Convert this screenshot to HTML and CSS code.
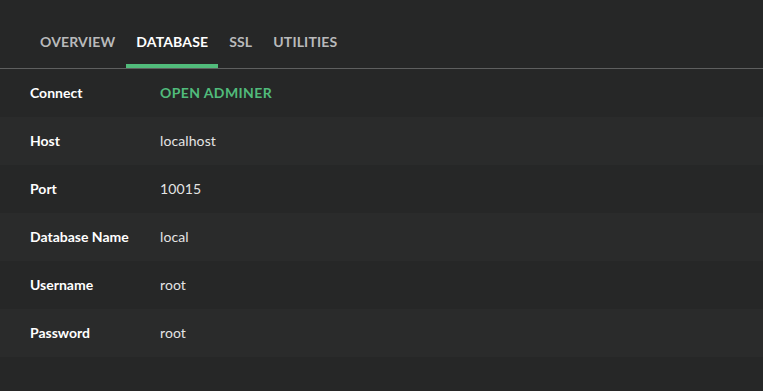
FILE: index.html
```html
<!DOCTYPE html>
<html lang="en">
<head>
  <meta charset="UTF-8">
  <title>Site — Database</title>
  <link rel="stylesheet" href="styles.css">
</head>
<body>
  <nav class="tabs">
    <a href="#" class="tab">Overview</a>
    <a href="#" class="tab active">Database</a>
    <a href="#" class="tab">SSL</a>
    <a href="#" class="tab">Utilities</a>
  </nav>

  <ul class="info">
    <li class="row"><span class="label">Connect</span><a href="#" class="link">Open Adminer</a></li>
    <li class="row"><span class="label">Host</span><span class="value">localhost</span></li>
    <li class="row"><span class="label">Port</span><span class="value">10015</span></li>
    <li class="row"><span class="label">Database Name</span><span class="value">local</span></li>
    <li class="row"><span class="label">Username</span><span class="value">root</span></li>
    <li class="row"><span class="label">Password</span><span class="value">root</span></li>
  </ul>
</body>
</html>
```

FILE: styles.css
```css
:root {
  --bg: #262727;
  --bg-alt: #2a2b2b;
  --green: #51bb7b;
  --line: #5e5f5f;
}
* { box-sizing: border-box; margin: 0; padding: 0; }
body { background: var(--bg); color: #fff; font-family: 'Lato', 'Noto Sans', sans-serif; font-size: 14px; min-height: 100vh; }

.tabs { display: flex; gap: 1px; padding: 22px 0 0 30px; border-bottom: 1px solid var(--line); }
.tab { display: block; height: 46px; line-height: 40px; padding: 0 10px; border-bottom: 4px solid transparent; color: #b9babb; font-weight: 700; text-transform: uppercase; text-decoration: none; font-size: 14px; letter-spacing: 0.15px; }
.tab.active { color: #fff; border-bottom-color: var(--green); }

.info { list-style: none; }
.row { display: flex; align-items: center; height: 48px; padding: 0 0 2px 30px; }
.row:nth-child(even) { background: var(--bg-alt); }
.label { width: 130px; font-weight: 700; color: #fff; }
.value { color: #e4e4e4; letter-spacing: 0.1px; }
.link { color: var(--green); font-weight: 700; text-transform: uppercase; text-decoration: none; letter-spacing: 0.4px; }
```
